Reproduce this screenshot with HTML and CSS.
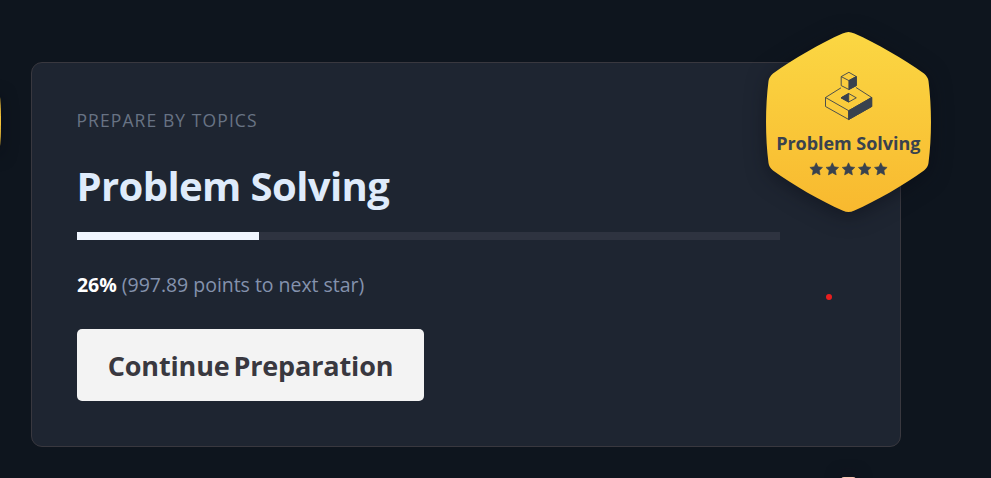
FILE: index.html
```html
<!DOCTYPE html>
<html lang="en">
<head>
<meta charset="utf-8">
<title>Problem Solving</title>
<link rel="stylesheet" href="styles.css">
</head>
<body>
<main class="page">
  <section class="card">
    <p class="eyebrow"><span>PREPARE BY TOPICS</span></p>
    <h1 class="title"><span>Problem Solving</span></h1>
    <div class="progress"><div class="progress-fill" style="width:25.9%"></div></div>
    <p class="status"><strong>26%</strong> <span class="points">(997.89 points to next star)</span></p>
    <button class="continue" type="button"><span>Continue Preparation</span></button>
    <svg class="badge" viewBox="736 2 225 240" width="225" height="240">
      <defs>
        <linearGradient id="gold" x1="0" y1="0" x2="0" y2="1">
          <stop offset="0" stop-color="#fbd743"/>
          <stop offset="1" stop-color="#f8b92f"/>
        </linearGradient>
        <path id="star" d="M0-6.4 1.9-2.4 6.3-1.8 3.1 1.3 3.9 5.7 0 3.6-3.9 5.7-3.1 1.3-6.3-1.8-1.9-2.4Z" fill="#39424e" stroke="#39424e" stroke-width=".6" stroke-linejoin="round"/>
      </defs>
      <path class="hexagon" fill="url(#gold)" d="M848.500 32Q851 32 854.500 33.500C876 43 904 59 924 73.500Q928 77 928.500 81C931.800 107 931.800 137 928.500 163Q928 167 924 170.500C904 185 876 201 854.500 210.500Q851 212 848.500 212Q846 212 842.500 210.500C821 201 793 185 773 170.500Q769 167 768.500 163C765.200 137 765.200 107 768.500 81Q769 77 773 73.500C793 59 821 43 842.500 33.500Q846 32 848.500 32Z"/>
      <g fill="none" stroke="#39424e" stroke-width=".9" stroke-linejoin="round">
        <path d="M841 87.800 825.500 97.500V106.500L848.700 119.500 871.700 106.500V97.500L856 87.500M825.500 97.500 848.700 110.700 871.700 97.500M848.700 110.700V119.500" />
        <path d="M848.700 110.700 871.700 97.500V106.500L848.700 119.500Z" fill="#39424e"/>
        <path d="M841 97.800 848.700 93.500 856.300 97.800 848.700 102Z"/>
        <path d="M841 97.800 848.700 93.500V102Z" fill="#39424e"/>
        <path d="M848.900 72.300 856.300 76.600V85.600L848.900 89.500 841.200 85.600V76.600Z" fill="#facd3e"/>
        <path d="M841.200 76.600 848.900 80.600 856.300 76.600"/>
        <path d="M848.900 80.600 856.300 76.600V85.600L848.900 89.500Z" fill="#39424e"/>
      </g>
      <text class="badge-name" x="776.200" y="149.500" textLength="144.200">Problem Solving</text>
      <use href="#star" x="816.200" y="169.200"/>
      <use href="#star" x="832.300" y="169.200"/>
      <use href="#star" x="848.500" y="169.200"/>
      <use href="#star" x="864.700" y="169.200"/>
      <use href="#star" x="880.800" y="169.200"/>
    </svg>
    <i class="dot"></i>
  </section>
  <i class="previous-badge"></i>
  <i class="next-badge"></i>
</main>
</body>
</html>
```
FILE: styles.css
```css
* { box-sizing: border-box; }
body {
  margin: 0;
  background: #0e151e;
  font-family: "Open Sans", sans-serif;
}
.page {
  position: relative;
  height: 478px;
  padding: 62px 90px 31px 31px;
  overflow: hidden;
}
.card {
  position: relative;
  display: flex;
  flex-direction: column;
  align-items: flex-start;
  height: 385px;
  padding: 44px 45px 45px;
  border: 1px solid #39383f;
  border-radius: 11px;
  background: #1e2531;
}
.eyebrow {
  margin: 0 0 0 -0.5px;
  font-size: 17.5px;
  line-height: 26px;
  letter-spacing: 1.09px;
  color: #687384;
}
.title {
  margin: 26px 0 0 -0.5px;
  font-size: 40px;
  line-height: 54px;
  font-weight: 700;
  letter-spacing: -0.6px;
  color: #dfebfb;
}
.progress {
  width: 703px;
  height: 8px;
  margin-top: 19px;
  background: #2e3340;
}
.progress-fill {
  height: 100%;
  background: #f0f6ff;
}
.status {
  margin: 31px 0 0;
  font-size: 19.5px;
  line-height: 28px;
  letter-spacing: -0.03px;
  color: #8492ad;
}
.status strong { color: #fff; }
.continue {
  width: 347px;
  height: 72px;
  margin: 30px 0 0;
  padding: 2px 0 0;
  border: 0;
  border-radius: 5px;
  background: #f3f3f3;
  color: #39383f;
  font: 700 27px/36px "Open Sans", sans-serif;
  letter-spacing: -0.15px;
  word-spacing: -3px;
  white-space: nowrap;
}
.badge {
  position: absolute;
  left: 704px;
  top: -61px;
  overflow: visible;
}
.hexagon { filter: drop-shadow(0 4px 10px rgba(7, 10, 20, .5)); }
.badge-name {
  font: 700 18px "Open Sans", sans-serif;
  fill: #39424e;
}
.dot {
  position: absolute;
  left: 794px;
  top: 231px;
  width: 6px;
  height: 6px;
  border-radius: 50%;
  background: #e81e1e;
}
.previous-badge {
  position: absolute;
  left: -10px;
  top: 93px;
  width: 11px;
  height: 57px;
  border-radius: 0 2px 2px 0 / 0 28px 28px 0;
  background: #f5c339;
  box-shadow: 0 4px 16px rgba(7, 10, 20, .5);
}
.next-badge {
  position: absolute;
  left: 841px;
  top: 477px;
  width: 15px;
  height: 6px;
  border-radius: 3px 3px 0 0;
  background: #f6c7b2;
  box-shadow: 0 0 16px rgba(20, 15, 25, .8);
}
```
